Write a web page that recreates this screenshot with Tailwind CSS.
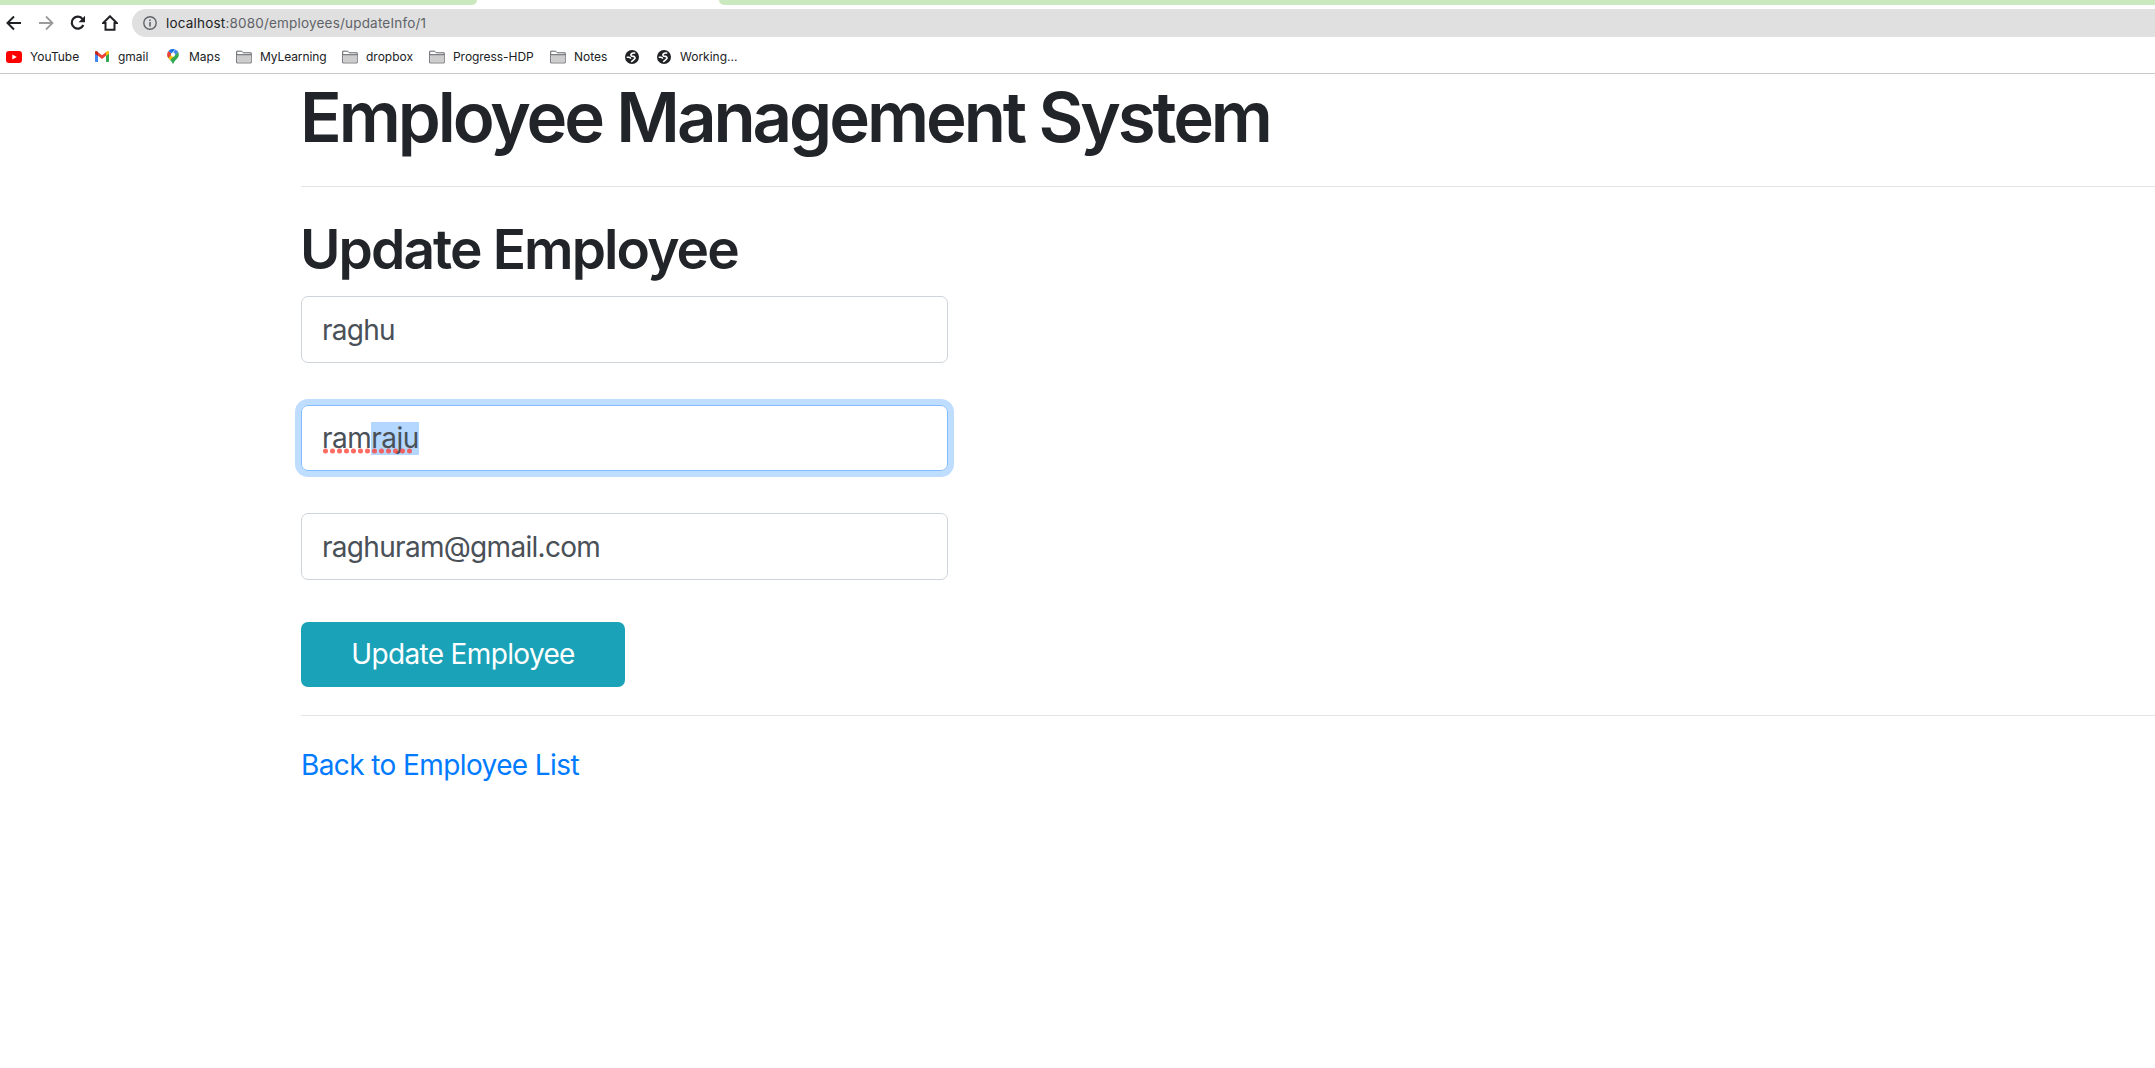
<!DOCTYPE html>
<html lang="en">
<head>
<meta charset="utf-8">
<title>Employee Management System</title>
<script src="https://cdn.jsdelivr.net/npm/@tailwindcss/browser@4"></script>
</head>
<body class="bg-white font-['Inter',sans-serif] text-[#212529] overflow-hidden">
<svg class="hidden">
  <symbol id="folder" viewBox="0 0 16 14"><path d="M.7 1.2h5l1.5 1.6h8v10.1H.7z" fill="#fff" stroke="#5f6368"/><path d="M1.2 5h13.5v7.4H1.2z" fill="#cdcdcd"/><path d="M.7 4.7h14.6" stroke="#5f6368"/></symbol>
  <symbol id="globe" viewBox="0 0 14 14"><circle cx="7" cy="7" r="7" fill="#202124"/><path d="M10.300 3H8.400Q5.900 3.300 5.900 5.200 6 6.400 8.200 6.400 10.300 6.600 10 8.400L8.300 10.200 6.200 11.800M1.700 7.200h2.300q1.600.200 1.600 1.600" fill="none" stroke="#fff" stroke-width="1.600"/></symbol>
</svg>
<header class="h-[74px] border-b border-[#c9c9c9]">
  <div class="flex h-[5px] justify-between">
    <div class="w-[477px] rounded-br-[6px] bg-[#cbe9be]"></div>
    <div class="w-[1436px] rounded-bl-[6px] bg-[#cbe9be]"></div>
  </div>
  <div class="mt-1 flex h-7 items-center">
    <div class="flex w-[132px] shrink-0 items-center gap-4 pl-1.5">
      <svg class="size-4" viewBox="0 0 16 16" fill="none" stroke="#202124" stroke-width="2"><path d="M15 8H2.500M8 1.500 1.500 8 8 14.500"/></svg>
      <svg class="size-4" viewBox="0 0 16 16" fill="none" stroke="#9b9b9b" stroke-width="1.800"><path d="M1 8h12.500M8 1.500 14.500 8 8 14.500"/></svg>
      <svg class="size-4" viewBox="0 0 16 16"><path d="M13.300 10A6 6 0 1 1 12.600 4.100" fill="none" stroke="#202124" stroke-width="2.200"/><path d="M15 .800v6.400H8.600z" fill="#202124"/></svg>
      <svg class="size-4" viewBox="0 0 16 16" fill="none" stroke="#202124" stroke-width="2"><path d="M8 1.300 1.200 8H3.500v6.700h9V8h2.300z"/></svg>
    </div>
    <div class="flex h-7 flex-1 items-center rounded-l-full bg-[#e0e0e0] pl-[11px]">
      <svg class="mr-[9px] size-[14px]" viewBox="0 0 14 14" fill="none" stroke="#5f6368" stroke-width="1.400"><circle cx="7" cy="7" r="6.200"/><path d="M7 6v4.500M7 3.400v1.500" stroke-width="1.600"/></svg>
      <span class="text-[13.5px] tracking-[0.19px] text-[#5f6368]"><span class="text-[#202124]">localhost</span>:8080/employees/updateInfo/1</span>
    </div>
  </div>
  <nav class="flex h-[36px] items-center pt-[3px] pl-[6px] text-[12px] text-[#202124]">
    <div class="flex w-[89px] items-center gap-2"><svg class="h-3 w-4" viewBox="0 0 16 12"><rect width="16" height="12" rx="3" fill="#f00"/><path d="m6.300 3.500 4.500 2.500-4.500 2.500z" fill="#fff"/></svg><span>YouTube</span></div>
    <div class="flex w-[71px] items-center gap-[9px]"><svg class="h-[11px] w-[14px]" viewBox="0 0 14 11"><path d="M0 2v8.200q0 .800.800.800H3V4z" fill="#4285f4"/><path d="M14 2v8.200q0 .800-.800.800H11V4z" fill="#34a853"/><path d="M3 1.200 7 4.300l4-3.100v3.600L7 8 3 4.800z" fill="#ea4335"/><path d="M0 1.500C0 0 1.600-.400 3 .900v4L0 2.800z" fill="#c5221f"/><path d="M14 1.500C14 0 12.400-.400 11 .900v4l3-2.100z" fill="#fbbc04"/></svg><span>gmail</span></div>
    <div class="flex w-[70px] items-center gap-[10px] pl-px"><svg class="h-[15px] w-[12px]" viewBox="0 0 12 15"><path d="M6 15C5.200 12 1 9.500.200 6.500L6 6l5.800.500C11 9.500 6.800 12 6 15z" fill="#34a853"/><path d="M1.300 8.900 8.500 1.300 11 3 3.300 11.200z" fill="#fbbc04"/><path d="M.100 5.500A6 6 0 0 1 1.600 2L5 5 1.300 8.900Q0 7.500.100 5.500" fill="#ea4335"/><path d="M1.500 2A6 6 0 0 1 8 .400L4.500 4.700z" fill="#1a73e8"/><path d="M8 .400a6 6 0 0 1 3.200 2.600L7.500 7 6 5z" fill="#4285f4"/><path d="M11.200 3c1.600 3-.400 5.500-2.200 7.500C7.500 12 6.500 13 6 15c-.400-1.700-1.500-2.800-2.700-3.800z" fill="#34a853"/><circle cx="6" cy="5.700" r="2.100" fill="#fff"/></svg><span>Maps</span></div>
    <div class="flex w-[106px] items-center gap-2"><svg class="h-[14px] w-4"><use href="#folder"/></svg><span class="tracking-[-0.1px]">MyLearning</span></div>
    <div class="flex w-[87px] items-center gap-2"><svg class="h-[14px] w-4"><use href="#folder"/></svg><span>dropbox</span></div>
    <div class="flex w-[121px] items-center gap-2"><svg class="h-[14px] w-4"><use href="#folder"/></svg><span class="tracking-[-0.05px]">Progress-HDP</span></div>
    <div class="flex w-[75px] items-center gap-2"><svg class="h-[14px] w-4"><use href="#folder"/></svg><span>Notes</span></div>
    <svg class="mr-[18px] size-[14px]"><use href="#globe"/></svg>
    <svg class="mr-[9px] size-[14px]"><use href="#globe"/></svg><span>Working...</span>
  </nav>
</header>
<main class="pl-[301px]">
  <h1 class="-ml-px h-[112px] pt-[2px] text-[69px] leading-[83px] font-semibold tracking-[-3.08px] whitespace-nowrap">Employee Management System</h1>
  <hr class="border-[#e4e4e4]">
  <h2 class="-ml-px h-[109px] pt-[29px] text-[55px] leading-[66px] font-semibold tracking-[-1.9px] whitespace-nowrap">Update Employee</h2>
  <form class="flex flex-col items-start text-[28px] text-[#495057]">
    <div class="flex h-[67px] w-[647px] items-center rounded-[7px] border border-[#ced4da] pl-[20px] tracking-[-0.72px]">raghu</div>
    <div class="mt-[42px] flex h-[66px] w-[647px] items-center rounded-[7px] border border-[#80bdff] pl-[20px] tracking-[-0.5px] ring-6 ring-[#bfdeff]"><div class="relative flex leading-[33px]"><span>ram</span><span class="bg-[#b3d7ff]">raju</span>
      <svg class="absolute top-[26px] left-0 h-[6px] w-[92px]"><path d="M3.500 3H91" stroke="#ff453a" stroke-opacity=".8" stroke-width="5" stroke-linecap="round" stroke-dasharray="0 7"/></svg></div></div>
    <div class="mt-[42px] flex h-[67px] w-[647px] items-center rounded-[7px] border border-[#ced4da] pl-[20px] tracking-[-0.7px]">raghuram@gmail.com</div>
    <button type="button" class="mt-[42px] h-[65px] w-[324px] rounded-[7px] bg-[#19a2b8] pb-px tracking-[-0.65px] text-white">Update Employee</button>
  </form>
  <hr class="mt-[28px] border-[#e4e4e4]">
  <a class="mt-[28px] inline-block text-[28px] leading-[42px] tracking-[-0.6px] text-[#007bff]">Back to Employee List</a>
</main>
</body>
</html>
